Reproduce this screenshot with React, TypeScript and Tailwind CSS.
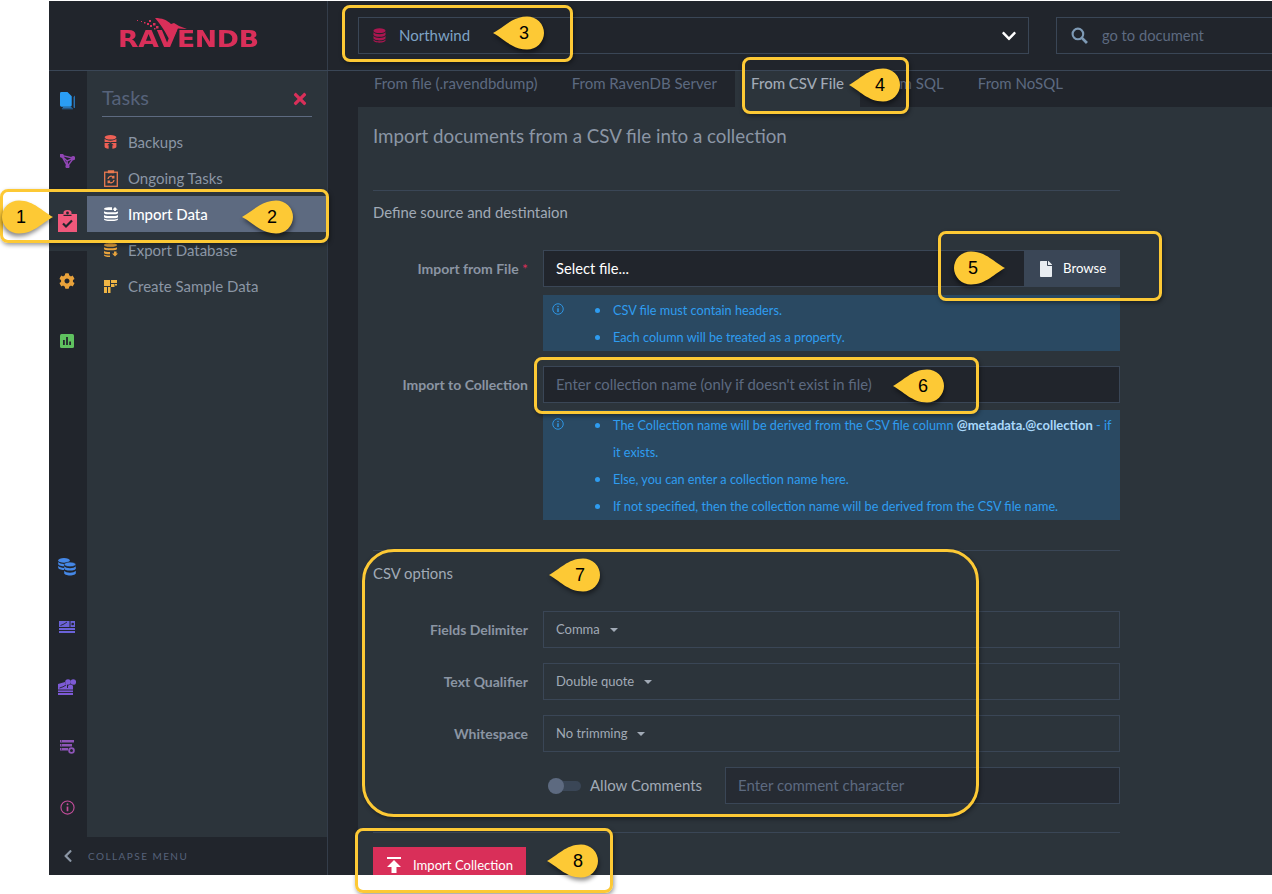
import React from "react";
import { FaCog, FaTimes, FaChevronDown, FaChevronLeft, FaFile } from "react-icons/fa";

const Stack = ({ className }: { className: string }) => (
  <svg viewBox="0 0 14 16" className={className} fill="currentColor">
    <ellipse cx="7" cy="2.8" rx="6.5" ry="2.6" />
    <path d="M.5 4.6v2.2c0 1.4 2.9 2.6 6.5 2.6s6.5-1.2 6.5-2.6V4.6c-1 1.3-3.6 2-6.5 2s-5.500-.7-6.500-2z" />
    <path d="M.5 8.600v2.200c0 1.400 2.900 2.600 6.500 2.600s6.500-1.200 6.500-2.600V8.600c-1 1.300-3.600 2-6.500 2s-5.500-.7-6.500-2z" />
    <path d="M.5 12.200v1c0 1.400 2.900 2.600 6.500 2.600s6.500-1.200 6.500-2.600v-1c-1 1.300-3.600 2-6.500 2s-5.500-.7-6.500-2z" />
  </svg>
);

const DocsIcon = () => (
  <svg viewBox="0 0 16 19" className="w-[15px] h-[18px]">
    <path d="M3 16.500h9.500M15 5v11.500" stroke="#2a7fc9" strokeWidth="1" fill="none" />
    <path d="M2 17.800h11.800M15.500 4v13" stroke="#2a7fc9" strokeWidth=".8" fill="none" />
    <path d="M0 1.500A1.500 1.500 0 0 1 1.500 0H8l4.500 4.500v9.500a1.500 1.500 0 0 1-1.500 1.500H1.500A1.500 1.500 0 0 1 0 14z" fill="#2a9df4" />
  </svg>
);

const GraphIcon = () => (
  <svg viewBox="0 0 16 15" className="w-[15px] h-[14px]" fill="none" stroke="#9146b5" strokeWidth="1.500">
    <path d="M1.500 1.500L14.500 4.500L8 13L1.500 1.500L7.500 7.500L14.500 4.500M7.500 7.500L8 13" />
    <circle cx="1.800" cy="1.800" r="1.500" fill="#9146b5" />
    <circle cx="14" cy="4.500" r="1.500" fill="#9146b5" />
    <circle cx="8" cy="13" r="1.500" fill="#9146b5" />
  </svg>
);

const TasksIcon = () => (
  <svg viewBox="0 0 19 22" className="w-[19px] h-[22px]">
    <path d="M0 4h5.500V2.500a4 2.500 0 0 1 8 0V4H19v18H0z" fill="#f0587b" />
    <circle cx="9.500" cy="3" r="1.400" fill="#22262d" />
    <path d="M5.500 4.800h8v1.200h-8z" fill="#22262d" />
    <path d="M5 13.500l3 3 6-6" stroke="#22262d" strokeWidth="2.200" fill="none" />
  </svg>
);

const ChartIcon = () => (
  <svg viewBox="0 0 14 14" className="w-[14px] h-[14px]">
    <rect width="14" height="14" rx="1.500" fill="#5fc15f" />
    <path d="M3 6h1.800v5H3zM6.100 3h1.800v8H6.100zM9.200 7.500H11V11H9.200z" fill="#22262d" />
  </svg>
);

const DbsIcon = () => (
  <svg viewBox="0 0 18 18" className="w-[18px] h-[18px]" fill="#4588e8">
    <ellipse cx="6" cy="2.400" rx="5.800" ry="2.300" />
    <path d="M.2 4v2c0 1.200 2.600 2.200 5.800 2.200V6C3.400 6 1.200 5.200.2 4zM.2 7.800v2c0 1.200 2.600 2.200 5.800 2.200v-2c-2.600 0-4.800-.9-5.800-2.200z" />
    <ellipse cx="12" cy="6.400" rx="5.800" ry="2.300" stroke="#22262d" strokeWidth=".6" />
    <path d="M6.200 8.200v2.200c0 1.200 2.600 2.200 5.800 2.200s5.800-1 5.800-2.200V8.200c-1 1.200-3.200 2-5.800 2s-4.800-.8-5.800-2zM6.200 12.800v2.400c0 1.200 2.600 2.200 5.800 2.200s5.800-1 5.800-2.200v-2.400c-1 1.200-3.200 2-5.800 2s-4.800-.8-5.800-2z" />
  </svg>
);

const ServerChartIcon = () => (
  <svg viewBox="0 0 16 12" className="w-[16px] h-[12px]">
    <path d="M0 0h10.500v6H0zM11.500 0H16v6h-4.500zM0 7h16v2H0zM0 10h16v2H0z" fill="#6a62d8" />
    <path d="M1.500 4.500L5 3l3-2" stroke="#22262d" strokeWidth=".9" fill="none" />
    <circle cx="13.700" cy="3" r="1.300" fill="#22262d" />
  </svg>
);

const ClusterIcon = () => (
  <svg viewBox="0 0 18 16" className="w-[18px] h-[16px]">
    <path d="M0 5l7-2v1.500h2V9h6v7H0z" fill="#7d5ad6" />
    <circle cx="10" cy="3" r="2.800" fill="#7d5ad6" />
    <circle cx="15.300" cy="3" r="2.800" fill="#7d5ad6" />
    <circle cx="12.500" cy="8" r="2.600" fill="#7d5ad6" />
    <path d="M1.500 9L5 7.800l3-1.800M0 11h15M0 13.500h15" stroke="#22262d" strokeWidth=".9" fill="none" />
  </svg>
);

const ServerGearIcon = () => (
  <svg viewBox="0 0 15 14" className="w-[15px] h-[14px]" fill="#8e55b8">
    <path d="M0 0h14v2.500H0zM0 4h14l-2 .1v2.400H0zM0 8h8v2.500H0z" />
    <circle cx="11.500" cy="10.500" r="2.400" fill="none" stroke="#8e55b8" strokeWidth="1.800" />
    <path d="M1 1h1M1 5h1M1 9h1" stroke="#22262d" />
  </svg>
);

const InfoCircle = ({ className, stroke = "#c24d9a" }: { className: string; stroke?: string }) => (
  <svg viewBox="0 0 16 16" className={className} fill="none" stroke={stroke} strokeWidth="1.200">
    <circle cx="8" cy="8" r="7" />
    <path d="M8 7v5" strokeWidth="1.800" />
    <circle cx="8" cy="4.500" r="1" fill={stroke} stroke="none" />
  </svg>
);

const BackupIcon = () => (
  <svg viewBox="0 0 13 16" className="w-[13px] h-[15px]" fill="#ee6055">
    <ellipse cx="6.500" cy="2.500" rx="6.300" ry="2.400" />
    <path d="M.2 4v3.500h12.600V4c-1 1.200-3.500 2-6.300 2S1.200 5.200.2 4zM.2 8.500v4c0 1 1.800 1.900 4.300 2.100V11H3l3.500-3 3.500 3H8.500v3.600c2.500-.2 4.300-1.100 4.300-2.100v-4z" />
  </svg>
);

const OngoingIcon = () => (
  <svg viewBox="0 0 14 17" className="w-[14px] h-[17px]" fill="none" stroke="#ea7a50" strokeWidth="1.300">
    <rect x=".7" y="2.200" width="12.600" height="14.100" />
    <path d="M4.500 2.500V1h5v1.500z" fill="#ea7a50" />
    <path d="M4 9a3 3 0 0 1 5.500-1.500M10 10a3 3 0 0 1-5.500 1.500M9.800 5.800v2H7.800M4.200 13.200v-2h2" />
  </svg>
);

const ImportIcon = () => (
  <svg viewBox="0 0 14 14" className="w-[14px] h-[14px]" fill="#ffffff">
    <path d="M0 2c0-1 2-1.800 4.500-1.800H8V3H4.500C2 3 0 2.800 0 2zM0 4.200C1 5 3 5.200 5 5.200h5.500c1.500 0 3-.4 3.500-1v1.800c0 .8-2 1.300-4 1.300H4C2 7.300 0 6.800 0 6zM0 8c1 .8 3 1 5 1h5c1.500 0 3.200-.3 4-1v2c0 .8-2 1.300-4 1.300H4C2 11.300 0 10.800 0 10zM0 11.400c1 .7 3 1 5 1h4c2 0 4-.3 5-1v.8c0 1-2 1.800-7 1.800s-7-.8-7-1.800z" />
    <path d="M11 0l2.700 2.700H12V4h-2V2.700H8.300z" />
  </svg>
);

const ExportIcon = () => (
  <svg viewBox="0 0 14 14" className="w-[14px] h-[14px]" fill="#e8a33d">
    <path d="M0 2c0-1 2-1.800 6.500-1.800S13 1 13 2 11 3.800 6.500 3.800 0 3 0 2zM0 4.200c1 .8 3 1.100 6.500 1.100s5.500-.3 6.500-1.100V6c0 .8-2 1.300-6.500 1.300S0 6.800 0 6zM0 8c1 .8 3 1 6 1v2.300C2 11.300 0 10.800 0 10zM0 11.400c1 .7 3 1 6 1V14c-4 0-6-.8-6-1.800z" />
    <path d="M11 13.500L8 10.500h2V8.500h2.500v2h1.500z" />
  </svg>
);

const SampleIcon = () => (
  <svg viewBox="0 0 13 13" className="w-[13px] h-[13px]" fill="#f0b544">
    <path d="M0 0h6v6H0zM7 0h6v3H7zM7 4h3.500v3H7zM0 7h3v6H0zM4 7h2.500v6H4zM11 4h2v1.500h-2z" />
  </svg>
);

const Logo = () => (
  <div className="relative w-[139px] h-[26px]">
    <svg viewBox="0 0 52 26" className="absolute left-[18px] -top-[6px] w-[52px] h-[26px]" fill="#d92f59">
      <path d="M18 0C25 0 30 2 34 6L37 5L42 8L50 11L41 10.500C38 16 36 20 34 24C30 18 27 10 18 0Z" />
      <g>
        <rect x="0" y="2" width="1" height="1" />
        <rect x="4" y="3" width="1" height="1" />
        <rect x="7" y="4" width="1.500" height="1.500" />
        <rect x="10" y="5" width="2" height="2" />
        <rect x="12" y="2" width="2" height="2" />
        <rect x="13" y="7" width="2" height="2" />
        <rect x="16" y="5" width="2.500" height="2.500" />
        <rect x="19" y="8" width="2.500" height="2.500" />
        <rect x="17" y="10" width="1.500" height="1.500" />
      </g>
    </svg>
    <span className="absolute -left-[1px] top-[3px] origin-left scale-x-[1.16] font-['DejaVu_Sans',sans-serif] font-bold text-[23px] leading-[24px] tracking-[-0.3px] text-[#d92f59] whitespace-nowrap">
      RAVENDB
    </span>
  </div>
);

const MenuItem = ({ icon, label, active }: { icon: React.ReactNode; label: string; active?: boolean }) => (
  <div className={`h-[36px] flex items-center pl-[17px] text-[15px] ${active ? "bg-[#5d6a80] text-white font-medium" : "text-[#8b96a5]"}`}>
    <span className="w-[24px] flex items-center">{icon}</span>
    {label}
  </div>
);

const Rail = ({ children, active }: { children: React.ReactNode; active?: boolean }) => (
  <div className={`h-[60px] flex items-center justify-center pr-[2px] ${active ? "bg-[#2c343b]" : ""}`}>{children}</div>
);

const Label = ({ children }: { children: React.ReactNode }) => (
  <div className="w-[155px] text-right text-[14px] font-bold text-[#8b95a3] whitespace-nowrap">{children}</div>
);

const Select = ({ label, value }: { label: string; value: string }) => (
  <div className="flex items-center gap-[15px] mb-[15px]">
    <Label>{label}</Label>
    <div className="flex-1 h-[37px] border border-[#3a4656] flex items-center px-[12px] text-[13px] text-[#a1aab6]">
      {value}
      <span className="ml-[10px] w-0 h-0 border-x-[4px] border-x-transparent border-t-[4px] border-t-[#a1aab6]" />
    </div>
  </div>
);

const Bullet = ({ children }: { children: React.ReactNode }) => (
  <li className="relative pl-[70px] leading-[27px]">
    <span className="absolute left-[52px] top-[11px] w-[5px] h-[5px] rounded-full bg-[#2e9cf0]" />
    {children}
  </li>
);

const Info = ({ children }: { children: React.ReactNode }) => (
  <div className="relative bg-[#2a4962] pt-[2px] text-[12.700px] text-[#2f9df0]">
    <InfoCircle className="absolute left-[9px] top-[8px] w-[12px] h-[12px]" stroke="#2f9df0" />
    <ul className="list-none">{children}</ul>
  </div>
);

const Callout = ({ n, pos, flip, num }: { n: number; pos: string; flip?: boolean; num: string }) => (
  <div className={`absolute w-[52px] h-[34px] ${pos}`}>
    <svg viewBox="0 0 52 34" className={`w-[52px] h-[34px] drop-shadow-[1px_3px_2px_rgba(0,0,0,0.45)] ${flip ? "-scale-x-100" : ""}`}>
      <path d="M0 17C10 12 19 .5 34 .5A17 16.500 0 0 1 34 33.500C19 33.500 10 22 0 17Z" fill="#fdc935" />
    </svg>
    <span className={`absolute top-[5px] text-center w-[20px] text-[18px] leading-[24px] text-black font-['Liberation_Sans',sans-serif] ${num}`}>{n}</span>
  </div>
);

const boxCls = "absolute border-[3px] border-[#fdc935] shadow-[1px_2px_4px_rgba(0,0,0,0.4)] pointer-events-none";

const tabs = ["From file (.ravendbdump)", "From RavenDB Server", "From CSV File", "From SQL", "From NoSQL"];

export default function App() {
  return (
    <div className="relative w-[1272px] h-[894px] overflow-hidden bg-white font-[Lato,sans-serif]">
      <div className="ml-[49px] mt-px w-[1223px] h-[874px] flex flex-col overflow-hidden bg-[#21252c]">
        {/* top */}
        <div className="h-[70px] flex border-b border-[#3a4656] shrink-0">
          <div className="w-[279px] border-r border-[#343d4a] flex items-center justify-center pt-[3px]">
            <Logo />
          </div>
          <div className="flex-1 flex items-start pt-[16px] pl-[30px] gap-[27px]">
            <div className="w-[671px] h-[37px] border border-[#3a4656] flex items-center pl-[14px] pr-[11px]">
              <Stack className="w-[13px] h-[15px] text-[#ab1650]" />
              <span className="ml-[13px] text-[15px] text-[#7ea3c6] flex-1">Northwind</span>
              <FaChevronDown className="text-white w-[16px] h-[16px]" />
            </div>
            <div className="flex-1 h-[37px] border border-r-0 border-[#3a4656] flex items-center pl-[14px]">
              <svg viewBox="0 0 16 16" className="w-[17px] h-[17px]" fill="none" stroke="#7e9ab5" strokeWidth="2">
                <circle cx="6.500" cy="6.500" r="5" />
                <path d="M10 10l5 5" strokeWidth="2.600" />
              </svg>
              <span className="ml-[14px] pb-px text-[14.700px] text-[#5d6a80]">go to document</span>
            </div>
          </div>
        </div>
        {/* body */}
        <div className="flex-1 flex min-h-0">
          <div className="w-[279px] border-r border-[#343d4a] flex flex-col shrink-0">
            <div className="flex-1 flex min-h-0">
              <div className="w-[38px] flex flex-col justify-between">
                <div>
                  <Rail><DocsIcon /></Rail>
                  <Rail><GraphIcon /></Rail>
                  <Rail active><TasksIcon /></Rail>
                  <Rail><FaCog className="w-[16px] h-[16px] text-[#e9a23b]" /></Rail>
                  <Rail><ChartIcon /></Rail>
                </div>
                <div>
                  <Rail><DbsIcon /></Rail>
                  <Rail><ServerChartIcon /></Rail>
                  <Rail><ClusterIcon /></Rail>
                  <Rail><ServerGearIcon /></Rail>
                  <Rail><InfoCircle className="w-[15px] h-[15px]" /></Rail>
                </div>
              </div>
              <div className="flex-1 bg-[#2c343b]">
                <div className="mx-[15px] h-[46px] mb-[7px] border-b border-[#5d6a80] flex items-end justify-between pb-[6px] pr-[5px]">
                  <span className="text-[20px] leading-[26px] text-[#56627a]">Tasks</span>
                  <FaTimes className="w-[18px] h-[18px] text-[#d92f59] mb-[2px] -mr-[2px]" />
                </div>
                <MenuItem icon={<BackupIcon />} label="Backups" />
                <MenuItem icon={<OngoingIcon />} label="Ongoing Tasks" />
                <MenuItem active icon={<ImportIcon />} label="Import Data" />
                <MenuItem icon={<ExportIcon />} label="Export Database" />
                <MenuItem icon={<SampleIcon />} label="Create Sample Data" />
              </div>
            </div>
            <div className="h-[38px] flex items-center pl-[12px] shrink-0">
              <FaChevronLeft className="w-[14px] h-[14px] text-[#8b96a5]" />
              <span className="ml-[13px] pt-px text-[10px] tracking-[1.450px] text-[#56627a]">COLLAPSE MENU</span>
            </div>
          </div>
          {/* main */}
          <div className="flex-1 pl-[30px] flex flex-col min-w-0">
            <div className="h-[36px] flex gap-[2.200px] shrink-0">
              {tabs.map((t, i) => (
                <div key={t} className={`px-[16px] flex items-center pb-[12px] text-[15px] whitespace-nowrap ${i === 2 ? "bg-[#2c343b] text-[#a1aab6] font-medium" : "text-[#5d6a80]"}`}>
                  {t}
                </div>
              ))}
            </div>
            <div className="flex-1 bg-[#2c343b] pl-[15px] min-h-0">
              <div className="w-[747px]">
                <h1 className="mt-[17px] text-[18.750px] leading-[24px] text-[#8b96a5]">Import documents from a CSV file into a collection</h1>
                <div className="mt-[42px] h-px bg-[#3a4656]" />
                <div className="mt-[11px] text-[14.850px] leading-[20px] text-[#a1aab6]">Define source and destintaion</div>
                <div className="mt-[28px] flex items-center gap-[15px]">
                  <Label>Import from File <span className="text-[#d92f59] font-normal">*</span></Label>
                  <div className="flex-1 h-[37px] flex">
                    <div className="flex-1 bg-[#21252c] border border-[#3a4656] flex items-center pl-[12px] text-[14.700px] text-white">Select file...</div>
                    <div className="w-[95px] bg-[#3a4656] flex items-center pl-[15px] text-[13.200px] text-white">
                      <FaFile className="w-[12px] h-[16px] text-[#e8ecf0]" />
                      <span className="ml-[11px]">Browse</span>
                    </div>
                  </div>
                </div>
                <div className="ml-[170px] mt-[8px]">
                  <Info>
                    <Bullet>CSV file must contain headers.</Bullet>
                    <Bullet>Each column will be treated as a property.</Bullet>
                  </Info>
                </div>
                <div className="mt-[15px] flex items-center gap-[15px]">
                  <Label>Import to Collection</Label>
                  <div className="flex-1 h-[37px] bg-[#21252c] border border-[#3a4656] flex items-center pl-[12px] text-[14.800px] text-[#5d6a80]">
                    Enter collection name (only if doesn't exist in file)
                  </div>
                </div>
                <div className="ml-[170px] mt-[7px]">
                  <Info>
                    <Bullet>
                      The Collection name will be derived from the CSV file column <b className="text-[13px] text-[#a9d8fb]">@metadata.@collection</b> - if it exists.
                    </Bullet>
                    <Bullet>Else, you can enter a collection name here.</Bullet>
                    <Bullet>If not specified, then the collection name will be derived from the CSV file name.</Bullet>
                  </Info>
                </div>
                <div className="mt-[30px] h-px bg-[#3a4656]" />
                <div className="mt-[12px] mb-[28px] text-[14.850px] leading-[20px] text-[#a1aab6]">CSV options</div>
                <Select label="Fields Delimiter" value="Comma" />
                <Select label="Text Qualifier" value="Double quote" />
                <Select label="Whitespace" value="No trimming" />
                <div className="flex items-center h-[37px]">
                  <div className="ml-[175px] relative w-[33px] h-[10px] rounded-full bg-[#3a4656] shrink-0">
                    <div className="absolute left-0 -top-[3px] w-[16px] h-[16px] rounded-full bg-[#5d6a80]" />
                  </div>
                  <span className="ml-[9px] w-[135px] text-[15px] text-[#a1aab6] whitespace-nowrap">Allow Comments</span>
                  <div className="flex-1 h-[37px] bg-[#262b33] border border-[#3a4656] flex items-center pl-[12px] text-[15px] text-[#5d6a80]">Enter comment character</div>
                </div>
                <div className="mt-[28px] h-px bg-[#3a4656]" />
                <div className="mt-[14px] w-[153px] h-[36px] bg-[#d92f59] flex items-center pl-[14px] text-[13.100px] text-white">
                  <svg viewBox="0 0 14 16" className="w-[14px] h-[16px] shrink-0" fill="#ffffff">
                    <path d="M0 0h14v2H0zM7 3l7 7H9.500v6h-5v-6H0z" />
                  </svg>
                  <span className="ml-[12px] pt-px whitespace-nowrap">Import Collection</span>
                </div>
              </div>
            </div>
          </div>
        </div>
      </div>

      {/* annotation overlays */}
      <div className={`${boxCls} left-0 top-[189px] w-[329px] h-[54px] rounded-lg`} />
      <div className={`${boxCls} left-[342px] top-[5px] w-[231px] h-[57px] rounded-lg`} />
      <div className={`${boxCls} left-[742px] top-[57px] w-[167px] h-[57px] rounded-lg`} />
      <div className={`${boxCls} left-[938px] top-[231px] w-[224px] h-[70px] rounded-lg`} />
      <div className={`${boxCls} left-[534px] top-[357px] w-[445px] h-[57px] rounded-lg`} />
      <div className={`${boxCls} left-[362px] top-[549px] w-[617px] h-[268px] rounded-[32px]`} />
      <div className={`${boxCls} left-[355px] top-[828px] w-[258px] h-[65px] rounded-lg`} />
      <Callout n={1} flip pos="left-[1px] top-[200px]" num="left-[10px]" />
      <Callout n={2} pos="left-[242px] top-[200px]" num="left-[20px]" />
      <Callout n={3} pos="left-[493px] top-[16px]" num="left-[21px]" />
      <Callout n={4} pos="left-[849px] top-[68px]" num="left-[21px]" />
      <Callout n={5} flip pos="left-[953px] top-[251px]" num="left-[10px]" />
      <Callout n={6} pos="left-[893px] top-[369px]" num="left-[20px]" />
      <Callout n={7} pos="left-[549px] top-[558px]" num="left-[21px]" />
      <Callout n={8} pos="left-[547px] top-[844px]" num="left-[21px]" />
    </div>
  );
}
